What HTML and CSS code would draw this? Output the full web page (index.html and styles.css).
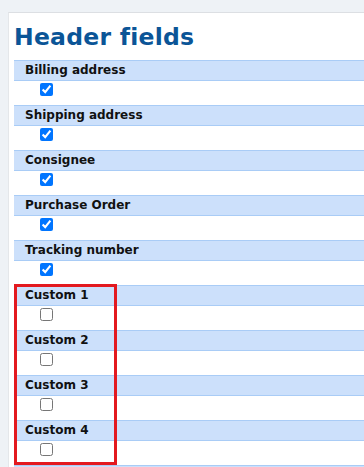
FILE: index.html
```html
<!DOCTYPE html>
<html lang="en">
<head>
    <meta charset="UTF-8">
    <meta name="viewport" content="width=device-width, initial-scale=1.0">
    <title>Header fields</title>
    <link rel="stylesheet" href="styles.css">
</head>
<body>
    <div class="panel">
        <h1>Header fields</h1>

        <div class="field">
            <div class="field-label">Billing address</div>
            <div class="field-value"><input type="checkbox" checked></div>
        </div>
        <div class="field">
            <div class="field-label">Shipping address</div>
            <div class="field-value"><input type="checkbox" checked></div>
        </div>
        <div class="field">
            <div class="field-label">Consignee</div>
            <div class="field-value"><input type="checkbox" checked></div>
        </div>
        <div class="field">
            <div class="field-label">Purchase Order</div>
            <div class="field-value"><input type="checkbox" checked></div>
        </div>
        <div class="field">
            <div class="field-label">Tracking number</div>
            <div class="field-value"><input type="checkbox" checked></div>
        </div>

        <!-- custom fields, highlighted -->
        <div class="custom-group">
            <div class="field">
                <div class="field-label">Custom 1</div>
                <div class="field-value"><input type="checkbox"></div>
            </div>
            <div class="field">
                <div class="field-label">Custom 2</div>
                <div class="field-value"><input type="checkbox"></div>
            </div>
            <div class="field">
                <div class="field-label">Custom 3</div>
                <div class="field-value"><input type="checkbox"></div>
            </div>
            <div class="field">
                <div class="field-label">Custom 4</div>
                <div class="field-value"><input type="checkbox"></div>
            </div>
            <div class="highlight"></div>
        </div>
        <div class="field">
            <div class="field-label"></div>
        </div>
    </div>
</body>
</html>
```

FILE: styles.css
```css
html, body {
    margin: 0;
    padding: 0;
    background-color: #eef2f6;
    font-family: "DejaVu Sans", Verdana, sans-serif;
    color: #111;
    overflow: hidden;
}

.panel {
    margin: 12px 0 0 8px;
    background: #fff;
    border-top: 1px solid #dcdfe3;
    border-left: 1px solid #e4e7ea;
    padding-left: 5px;
    height: 600px;
}

h1 {
    margin: 10px 0 9px;
    font-size: 23.5px;
    line-height: 28px;
    letter-spacing: 0.25px;
    font-weight: bold;
    color: #0b5597;
}

.field-label {
    background: #cce0fb;
    border-top: 1px solid #a9ccf6;
    border-bottom: 1px solid #a9ccf6;
    height: 19px;
    line-height: 19px;
    font-size: 12px;
    font-weight: bold;
    padding-left: 11px;
}

.field-value {
    height: 24px;
}

.field-value input {
    margin: 2px 0 0 26px;
    width: 13px;
    height: 13px;
}

.custom-group {
    position: relative;
}

/* red annotation frame over the custom fields */
.highlight {
    position: absolute;
    left: 0;
    top: -1px;
    width: 97px;
    height: 175px;
    border: 3px solid #e3191f;
    pointer-events: none;
}
```
